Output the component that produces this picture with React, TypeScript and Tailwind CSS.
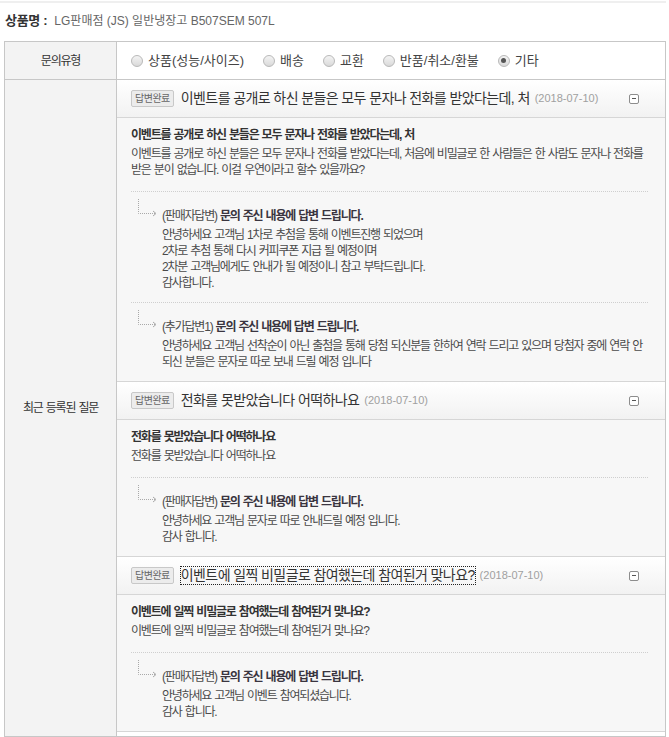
import React from "react";

type Reply = { tag: string; lines: string[] };
type Item = { title: string; lines: string[]; replies: Reply[]; focused?: boolean };

const items: Item[] = [
  {
    title: "이벤트를 공개로 하신 분들은 모두 문자나 전화를 받았다는데, 처",
    lines: [
      "이벤트를 공개로 하신 분들은 모두 문자나 전화를 받았다는데, 처음에 비밀글로 한 사람들은 한 사람도 문자나 전화를",
      "받은 분이 없습니다. 이걸 우연이라고 할수 있을까요?",
    ],
    replies: [
      {
        tag: "(판매자답변)",
        lines: [
          "안녕하세요 고객님 1차로 추첨을 통해 이벤트진행 되었으며",
          "2차로 추첨 통해 다시 커피쿠폰 지급 될 예정이며",
          "2차분 고객님에게도 안내가 될 예정이니 참고 부탁드립니다.",
          "감사합니다.",
        ],
      },
      {
        tag: "(추가답변1)",
        lines: [
          "안녕하세요 고객님 선착순이 아닌 출첨을 통해 당첨 되신분들 한하여 연락 드리고 있으며 당첨자 중에 연락 안",
          "되신 분들은 문자로 따로 보내 드릴 예정 입니다",
        ],
      },
    ],
  },
  {
    title: "전화를 못받았습니다 어떡하나요",
    lines: ["전화를 못받았습니다 어떡하나요"],
    replies: [
      {
        tag: "(판매자답변)",
        lines: ["안녕하세요 고객님 문자로 따로 안내드릴 예정 입니다.", "감사 합니다."],
      },
    ],
  },
  {
    title: "이벤트에 일찍 비밀글로 참여했는데 참여된거 맞나요?",
    lines: ["이벤트에 일찍 비밀글로 참여했는데 참여된거 맞나요?"],
    focused: true,
    replies: [
      {
        tag: "(판매자답변)",
        lines: ["안녕하세요 고객님 이벤트 참여되셨습니다.", "감사 합니다."],
      },
    ],
  },
];

const types = ["상품(성능/사이즈)", "배송", "교환", "반품/취소/환불", "기타"];

const Radio = ({ checked }: { checked?: boolean }) => (
  <span className="flex h-[12px] w-[12px] items-center justify-center rounded-full border border-[#b9b9b9] bg-gradient-to-b from-[#f4f4f4] to-[#d9d9d9]">
    {checked && <span className="h-[5px] w-[5px] rounded-full bg-[#555]" />}
  </span>
);

const Arrow = () => (
  <svg width="24" height="18" viewBox="0 0 24 18" className="shrink-0">
    <path d="M1.5 0 V14.5 H18" fill="none" stroke="#a9a9a9" strokeWidth="1" strokeDasharray="1 1" />
    <path d="M16 12 L19 14.5 L16 17" fill="none" stroke="#a9a9a9" strokeWidth="1" />
  </svg>
);

const Minus = () => (
  <span className="flex h-[10px] w-[10px] items-center justify-center rounded-[2px] border border-[#8d8d8d] bg-white">
    <span className="h-px w-[4px] bg-[#555]" />
  </span>
);

const QnaItem = ({ item }: { item: Item }) => (
  <div>
    <div className="flex h-[38px] items-center border-b border-[#d6d6d6] bg-gradient-to-b from-white to-[#f2f2f2] pl-[14px] pr-[26px]">
      <span className="rounded-[2px] border border-[#c8c8c8] bg-[#ececec] px-[3px] text-[10px] leading-[15px] tracking-[-0.5px] text-[#666]">
        답변완료
      </span>
      <span
        className={
          "ml-[7px] text-[14px] leading-[17px] tracking-[-0.6px] text-[#333] " +
          (item.focused ? "outline outline-1 outline-dotted outline-[#222]" : "")
        }
      >
        {item.title}
      </span>
      <span className="ml-[5px] text-[11px] text-[#a0a0a0]">(2018-07-10)</span>
      <span className="ml-auto">
        <Minus />
      </span>
    </div>
    <div className="border-b border-[#d6d6d6] bg-[#f7f7f7] pl-[14px] pr-[17px] pt-[9px] pb-[11px]">
      <div className="text-[12px] tracking-[-1.2px] [word-spacing:1px] leading-[16px] text-[#4a4a4a]">
        <div className="mb-[3px] font-bold text-[#333]">{item.title}</div>
        {item.lines.map((l, i) => (
          <div key={i} className="whitespace-nowrap">
            {l}
          </div>
        ))}
      </div>
      {item.replies.map((r, i) => (
        <div
          key={i}
          className={
            "border-t border-dotted border-[#cfcfcf] pt-[7px] " + (i === 0 ? "mt-[13px]" : "mt-[11px]")
          }
        >
          <div className="flex pl-[6px]">
            <div className="w-[25px] shrink-0">
              <Arrow />
            </div>
            <div className="pt-[9px] text-[12px] tracking-[-1.2px] [word-spacing:1px] leading-[16px] text-[#4a4a4a]">
              <div className="mb-[3px]">
                {r.tag} <span className="font-bold text-[#3a3540]">문의 주신 내용에 답변 드립니다.</span>
              </div>
              {r.lines.map((l, j) => (
                <div key={j} className="whitespace-nowrap">
                  {l}
                </div>
              ))}
            </div>
          </div>
        </div>
      ))}
    </div>
  </div>
);

export default function App() {
  return (
    <div className="min-h-[737px] bg-white font-['Liberation_Sans','Noto_Sans_CJK_KR',sans-serif]">
      <div className="mt-px h-[2px] w-[666px] bg-[#efefef]" />
      <div className="flex h-[38px] items-center pb-[3px] pl-[5px] text-[12px]">
        <span className="text-[13px] font-bold tracking-[-0.3px] text-[#333]">상품명 :</span>
        <span className="ml-[7px] text-[#666]">LG판매점 (JS) 일반냉장고 B507SEM 507L</span>
      </div>
      <div className="ml-[4px] w-[662px] border border-[#c7c7c7]">
        <div className="grid grid-cols-[112px_1fr] border-b border-[#c7c7c7]">
          <div className="flex h-[37px] items-center justify-center border-r border-[#c7c7c7] bg-[#f3f3f3] text-[12px] tracking-[-1.2px] text-[#333]">
            문의유형
          </div>
          <div className="flex items-center pl-[14px] text-[13px] text-[#444]">
            {types.map((t, i) => (
              <label key={t} className={"flex items-center gap-[5px] " + (i > 0 ? "ml-[19px]" : "")}>
                <Radio checked={i === types.length - 1} />
                <span>{t}</span>
              </label>
            ))}
          </div>
        </div>
        <div className="grid grid-cols-[112px_1fr]">
          <div className="flex items-center justify-center border-r border-[#c7c7c7] bg-[#f3f3f3] text-[12px] tracking-[-1.2px] [word-spacing:1px] text-[#333]">
            최근 등록된 질문
          </div>
          <div className="pb-[4px]">
            {items.map((it, i) => (
              <QnaItem key={i} item={it} />
            ))}
          </div>
        </div>
      </div>
    </div>
  );
}
